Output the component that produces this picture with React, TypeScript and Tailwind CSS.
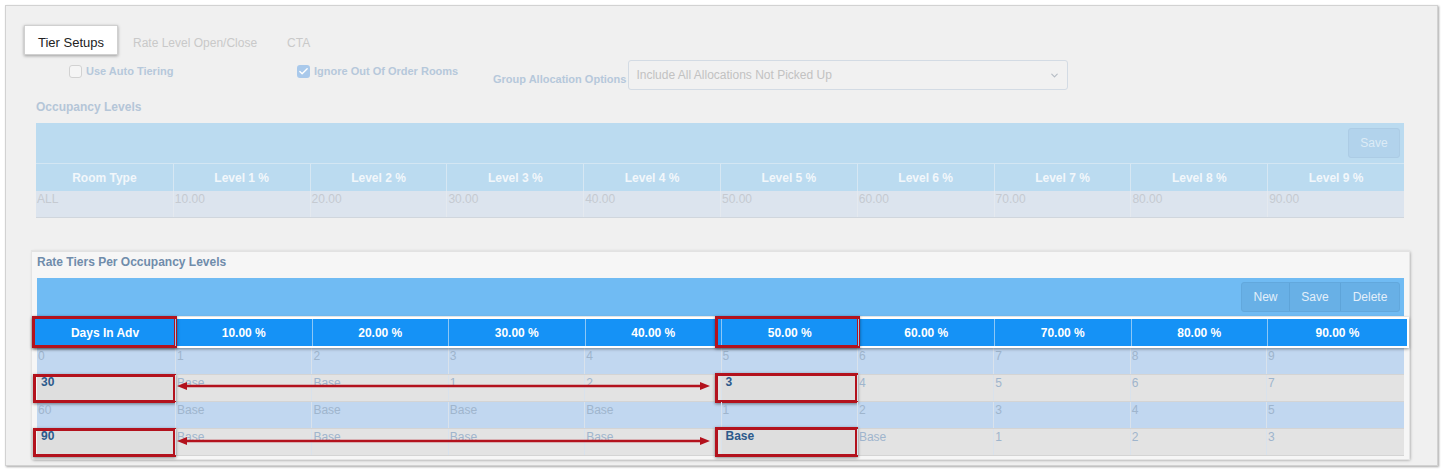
import React from 'react';
import { Check, ChevronDown } from 'lucide-react';

const levels = ['Level 1 %', 'Level 2 %', 'Level 3 %', 'Level 4 %', 'Level 5 %', 'Level 6 %', 'Level 7 %', 'Level 8 %', 'Level 9 %'];
const levelValues = ['10.00', '20.00', '30.00', '40.00', '50.00', '60.00', '70.00', '80.00', '90.00'];
const tierHeaders = ['Days In Adv', '10.00 %', '20.00 %', '30.00 %', '40.00 %', '50.00 %', '60.00 %', '70.00 %', '80.00 %', '90.00 %'];

const tierRows = [
  ['0', '1', '2', '3', '4', '5', '6', '7', '8', '9'],
  ['30', 'Base', 'Base', '1', '2', '3', '4', '5', '6', '7'],
  ['60', 'Base', 'Base', 'Base', 'Base', '1', '2', '3', '4', '5'],
  ['90', 'Base', 'Base', 'Base', 'Base', 'Base', 'Base', '1', '2', '3'],
];

// cells marked with a red box in the screenshot
const marked = (r: number, c: number) => (r === 1 || r === 3) && (c === 0 || c === 5);

const RedBox = ({ className }: { className: string }) => (
  <div className={`absolute border-[3px] border-[#b3121d] shadow-[0_1px_3px_rgba(0,0,0,0.45)] pointer-events-none ${className}`} />
);

const App: React.FC = () => {
  return (
    <div className="w-[1445px] h-[473px] bg-white pt-[5px] pl-[5px] font-['Liberation_Sans',Arial,sans-serif]">
      <div className="w-[1433px] h-[461px] bg-[#f0f0f0] border border-[#d2d2d2] shadow-[1px_1px_2px_rgba(0,0,0,0.35)]">
        {/* tabs */}
        <div className="flex items-stretch mt-[19px] ml-[18px] h-[30px] text-[12px]">
          <div className="px-[13px] pt-[5px] flex items-center bg-white border border-[#d0d0d0] shadow-[0_1px_3px_rgba(0,0,0,0.35)] text-[13px] text-[#222]">
            Tier Setups
          </div>
          <div className="px-[15px] pt-[6px] flex items-center text-[#c9c9c9]">Rate Level Open/Close</div>
          <div className="px-[15px] pt-[6px] flex items-center text-[#c9c9c9]">CTA</div>
        </div>

        {/* options */}
        <div className="flex items-start mt-[5px] ml-[63px] h-[30px] text-[11px] leading-[14px] font-bold text-[#b6c8db]">
          <div className="w-[228px] flex items-center gap-1 mt-[4px]">
            <div className="w-[13px] h-[13px] rounded-[3px] border border-[#d2d2d2] bg-[#f5f5f5]" />
            <span>Use Auto Tiering</span>
          </div>
          <div className="w-[196px] flex items-center gap-1 mt-[4px]">
            <div className="w-[13px] h-[13px] rounded-[3px] bg-[#a9c9eb] flex items-center justify-center">
              <Check className="w-[11px] h-[11px] text-white" strokeWidth={3} />
            </div>
            <span>Ignore Out Of Order Rooms</span>
          </div>
          <div className="flex items-start">
            <span className="mt-[12px] mr-[2px]">Group Allocation Options</span>
            <div className="w-[440px] h-[30px] rounded-[3px] border border-[#d3dbe4] bg-[#f1f1f1] flex items-center justify-between px-[7px] text-[12px] font-normal text-[#c2c2c2]">
              <span>Include All Allocations Not Picked Up</span>
              <ChevronDown className="w-[11px] h-[11px] text-[#b5bcc4]" strokeWidth={2.5} />
            </div>
          </div>
        </div>

        {/* occupancy levels */}
        <div className="mt-[10px] ml-[30px] text-[12px] leading-[14px] font-bold text-[#b5c6d8]">Occupancy Levels</div>
        <div className="mt-[9px] ml-[30px] w-[1368px] text-[12px] leading-[14px]">
          <div className="h-[40px] bg-[#bbdbf0] flex items-center justify-end pr-[4px]">
            <div className="w-[52px] h-[30px] rounded-[3px] bg-[#b2d3ec] border border-[#accce5] flex items-center justify-center text-[#dcebf6]">
              Save
            </div>
          </div>
          <div className="grid grid-cols-10 h-[28px] bg-[#bbdbf0] border-t border-[#d3e6f3]">
            {['Room Type', ...levels].map((h, i) => (
              <div key={h} className={`flex items-center justify-center font-bold text-[#f2f7fb] ${i > 0 ? 'border-l border-[#d6e7f3]' : ''}`}>
                {h}
              </div>
            ))}
          </div>
          <div className="grid grid-cols-10 h-[27px] bg-[#dce4ee] border-b border-[#d0d6dd]">
            {['ALL', ...levelValues].map((v, i) => (
              <div key={i} className={`pl-[1px] pt-[1px] text-[#c5cad1] ${i > 0 ? 'border-l border-[#e4e9ef]' : ''}`}>
                {v}
              </div>
            ))}
          </div>
        </div>

        {/* rate tiers */}
        <div className="mt-[33px] ml-[26px] w-[1377px] h-[208px] bg-[#f6f6f6] border-t border-[#e2e2e2] shadow-[0_0_0_1px_#e4e4e4,1px_1px_3px_rgba(0,0,0,0.4)] px-[5px] text-[12px] leading-[14px]">
          <div className="h-[26px] pt-[3px] font-bold text-[#6f8cab]">Rate Tiers Per Occupancy Levels</div>
          <div className="h-[38px] bg-[#70bbf3] flex items-center justify-end pr-[4px]">
            <div className="flex h-[30px] rounded-[3px] bg-[#68b0e6] border border-[#62a8dd] text-[#e3effa]">
              <div className="w-[47px] flex items-center justify-center">New</div>
              <div className="w-[51px] flex items-center justify-center border-l border-[#5ea4d9]">Save</div>
              <div className="w-[59px] flex items-center justify-center border-l border-[#5ea4d9]">Delete</div>
            </div>
          </div>
          <div className="-ml-[4px] -mr-[5px] mt-[1px] border-2 border-white bg-[#1592f6] shadow-[0_1px_3px_rgba(0,0,0,0.4)] grid grid-cols-[140px_repeat(8,1fr)_140px] h-[31px] relative z-10">
            {tierHeaders.map((h, i) => (
              <div key={h} className={`relative flex items-center justify-center font-bold text-white ${i > 0 ? 'border-l border-[#8cc7f6]' : ''}`}>
                {h}
                {(i === 0 || i === 5) && <RedBox className={i === 0 ? '-left-[3px] -top-[3px] -right-[2px] -bottom-[2px]' : '-left-[7px] -top-[3px] -right-[2px] -bottom-[2px]'} />}
              </div>
            ))}
          </div>
          <div className="relative">
            {tierRows.map((row, r) => (
              <div
                key={r}
                className={`grid grid-cols-[138px_repeat(8,1fr)_138px] h-[27px] border-b border-[#d4d4d4] ${r % 2 === 0 ? 'bg-[#c1d7f0]' : 'bg-[#e3e3e3]'}`}
              >
                {row.map((v, c) => (
                  <div
                    key={c}
                    className={`relative ${c > 0 ? 'border-l border-[#d9e2ec]' : ''} ${
                      marked(r, c) ? 'bg-[#dedede] font-bold text-[#2c5a8c] pl-[4px] pt-0' : 'pl-[1px] pt-[1px] text-[#9fb5cd]'
                    }`}
                  >
                    {v}
                    {marked(r, c) && (
                      <RedBox className={c === 0 ? '-left-[4px] -top-[1px] -right-[1px] -bottom-[2px]' : '-left-[7px] -top-[2px] -right-[1px] -bottom-[2px]'} />
                    )}
                  </div>
                ))}
              </div>
            ))}
            <svg className="absolute inset-0 w-full h-full pointer-events-none overflow-visible">
              {[38, 93].map((y) => (
                <g key={y} fill="#b3121d" stroke="#b3121d">
                  <line x1={146} y1={y} x2={667} y2={y} strokeWidth={2.5} />
                  <polygon points={`${140},${y} ${150},${y - 4} ${150},${y + 4}`} stroke="none" />
                  <polygon points={`${673},${y} ${663},${y - 4} ${663},${y + 4}`} stroke="none" />
                </g>
              ))}
            </svg>
          </div>
        </div>
      </div>
    </div>
  );
};

export default App;
